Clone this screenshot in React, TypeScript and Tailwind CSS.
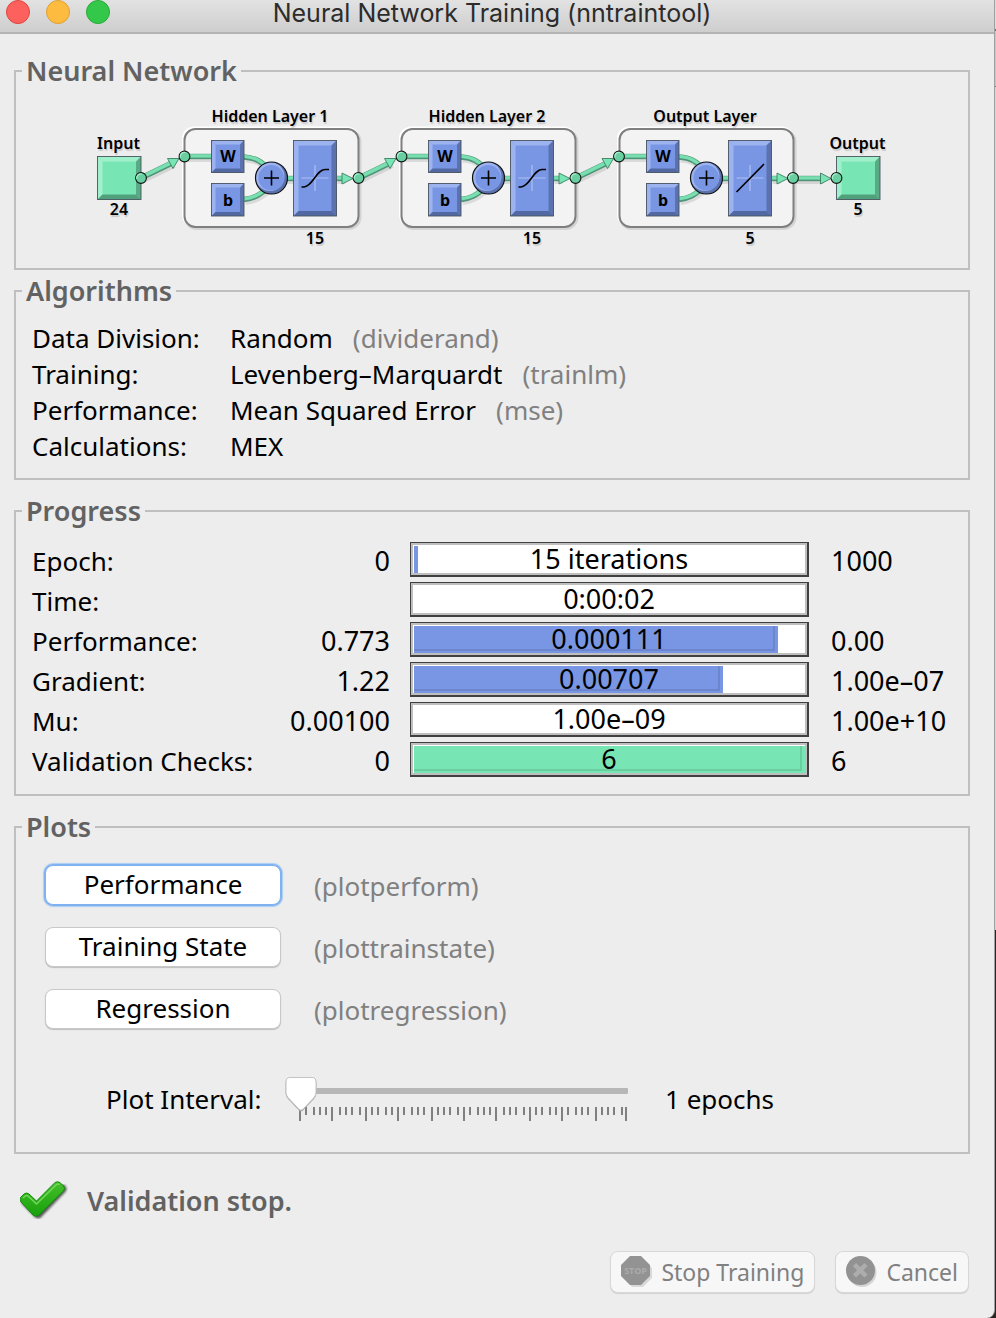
import { useState } from "react";
import type { ReactNode } from "react";

const BLUE = { face: "#7896e4", light: "#9db3f0", dark: "#5b72ae", darker: "#5268a2" };
const GREEN = { face: "#78e6b4", light: "#a0f0cc", dark: "#59ab86", darker: "#50a07c" };

type Tone = typeof BLUE;

function Block({ x, y, w, h, tone, bevel = 4 }: { x: number; y: number; w: number; h: number; tone: Tone; bevel?: number }) {
  const r = x + w;
  const b = y + h;
  const e = bevel;
  return (
    <g>
      <rect x={x} y={y} width={w} height={h} fill={tone.face} />
      <path d={`M${x} ${y}H${r}L${r - e} ${y + e}H${x + e}Z`} fill={tone.light} />
      <path d={`M${x} ${y}V${b}L${x + e} ${b - e}V${y + e}Z`} fill={tone.light} />
      <path d={`M${r} ${y}V${b}L${r - e} ${b - e}V${y + e}Z`} fill={tone.dark} />
      <path d={`M${x} ${b}H${r}L${r - e} ${b - e}H${x + e}Z`} fill={tone.darker} />
      <rect x={x} y={y} width={w} height={h} fill="none" stroke="#4a5560" strokeWidth="0.9" />
    </g>
  );
}

function Wire({ d }: { d: string }) {
  return (
    <g fill="none">
      <path d={d} stroke="#000" strokeOpacity="0.1" strokeWidth="5" transform="translate(1.5 3)" />
      <path d={d} stroke="#4f9478" strokeWidth="5.4" />
      <path d={d} stroke="#78dfb0" strokeWidth="3.4" transform="translate(0 -0.6)" />
    </g>
  );
}

function Port({ x, y }: { x: number; y: number }) {
  return (
    <g>
      <circle cx={x} cy={y} r="5.4" fill="#69cfa1" stroke="#111" strokeWidth="1.1" />
      <path d={`M${x - 4} ${y + 1}A4 4 0 0 1 ${x + 1} ${y - 4}`} fill="none" stroke="#a5efcd" strokeWidth="1.2" />
    </g>
  );
}

function Arrow({ points }: { points: string }) {
  return <polygon points={points} fill="#78e6b4" stroke="#3f7d63" strokeWidth="0.9" />;
}

function Label({ x, y, children }: { x: number; y: number; children: ReactNode }) {
  return (
    <text x={x} y={y} textAnchor="middle" className="text-[16px] font-semibold [text-shadow:1px_2px_1px_rgba(0,0,0,0.15)]">
      {children}
    </text>
  );
}

function Layer({ x, title, size, linear = false }: { x: number; title: string; size: number; linear?: boolean }) {
  return (
    <g transform={`translate(${x} 0)`}>
      <rect x="1.5" y="130.500" width="174.500" height="98" rx="11" fill="none" stroke="#000" strokeOpacity="0.1" strokeWidth="3" />
      <rect x="-1" y="127.5" width="175" height="98.5" rx="11" fill="none" stroke="#fff" strokeWidth="2" />
      <rect x="0.5" y="129" width="174" height="98" rx="11" fill="#f3f3f3" stroke="#7f7f7f" strokeWidth="2" />
      <Label x={86} y={122}>{title}</Label>
      <Wire d="M0 156.5H28" />
      <Wire d="M60 157C72 158 76 161 84 168" />
      <Wire d="M60 199.500C72 198 76 194 84 188" />
      <Wire d="M100 178.500H112" />
      <Wire d="M152 178.500H160" />
      <Block x={27.5} y={140.5} w={32.500} h={32} tone={BLUE} />
      <Block x={27.5} y={183.5} w={32.500} h={32.500} tone={BLUE} />
      <text x="44" y="162" textAnchor="middle" className="text-[16px] font-bold">W</text>
      <text x="44" y="206" textAnchor="middle" className="text-[16px] font-bold">b</text>
      <circle cx="87.500" cy="178" r="16" fill="#5b72ae" />
      <circle cx="86" cy="176.500" r="14.500" fill="#9db3f0" />
      <circle cx="87.200" cy="177.700" r="12.800" fill={BLUE.face} />
      <circle cx="87.500" cy="178" r="16" fill="none" stroke="#111" strokeWidth="1.200" />
      <path d="M80 178H95M87.500 170.500V185.500" stroke="#000" strokeWidth="1.600" />
      <Block x={109.5} y={140.5} w={43} h={75.500} tone={BLUE} bevel={5} />
      <path d="M117.500 178H144.500M131 165V191" stroke="#aebff3" strokeWidth="1.200" />
      <path
        d={linear ? "M117.500 192L145 164" : "M117.500 187H120C129 186 132 170 141 169.500H145"}
        fill="none"
        stroke="#000"
        strokeWidth="1.600"
      />
      <Arrow points="158,173 158,184 169,178.500" />
      <Label x={131} y={244}>{size}</Label>
    </g>
  );
}

function NetworkDiagram() {
  return (
    <svg viewBox="92 101 800 154" className="w-[800px] max-w-full" role="img" aria-label="Network diagram">
      <Layer x={184} title="Hidden Layer 1" size={15} />
      <Layer x={401} title="Hidden Layer 2" size={15} />
      <Layer x={619} title="Output Layer" size={5} linear />

      <Label x={118.500} y={149}>Input</Label>
      <Block x={97.5} y={156.5} w={43.500} h={43} tone={GREEN} bevel={5} />
      <Label x={119} y={215}>24</Label>

      <Label x={857.500} y={149}>Output</Label>
      <Block x={836.5} y={156.5} w={43.500} h={43} tone={GREEN} bevel={5} />
      <Label x={858} y={215}>5</Label>

      <Wire d="M141 178L173 162.500" />
      <Wire d="M359 178L391 162.500" />
      <Wire d="M576 178L608 162.500" />
      <Wire d="M793 178.500H822" />
      <Arrow points="167.500,158.500 179,158.500 173,168.500" />
      <Arrow points="384.500,158.500 396,158.500 390,168.500" />
      <Arrow points="602,158.500 613.500,158.500 607.500,168.500" />
      <Arrow points="820.500,173 820.500,184 831,178.500" />
      <Port x={141} y={178} />
      <Port x={184.500} y={156.500} />
      <Port x={358.500} y={178} />
      <Port x={401.500} y={156.500} />
      <Port x={575.500} y={178} />
      <Port x={619} y={156.500} />
      <Port x={793} y={178} />
      <Port x={836.500} y={178} />
    </svg>
  );
}

function Panel({ title, className, children }: { title: string; className: string; children: ReactNode }) {
  return (
    <fieldset className={`border-2 border-[#bfbfbf] px-4 ${className}`}>
      <legend className="-ml-2.5 px-1 text-[27px] leading-9 font-semibold text-[#626262]">{title}</legend>
      {children}
    </fieldset>
  );
}

const algorithms = [
  { label: "Data Division:", value: "Random", fn: "(dividerand)" },
  { label: "Training:", value: "Levenberg–Marquardt", fn: "(trainlm)" },
  { label: "Performance:", value: "Mean Squared Error", fn: "(mse)" },
  { label: "Calculations:", value: "MEX", fn: "" },
];

const progress = [
  { label: "Epoch:", min: "0", text: "15 iterations", max: "1000", pct: 1, color: "bg-[#7896e4]" },
  { label: "Time:", min: "", text: "0:00:02", max: "", pct: 0, color: "bg-[#7896e4]" },
  { label: "Performance:", min: "0.773", text: "0.000111", max: "0.00", pct: 93, color: "bg-[#7896e4]" },
  { label: "Gradient:", min: "1.22", text: "0.00707", max: "1.00e–07", pct: 79, color: "bg-[#7896e4]" },
  { label: "Mu:", min: "0.00100", text: "1.00e–09", max: "1.00e+10", pct: 0, color: "bg-[#7896e4]" },
  { label: "Validation Checks:", min: "0", text: "6", max: "6", pct: 100, color: "bg-[#78e6b4]" },
];

function Bar({ label, text, pct, color }: { label: string; text: string; pct: number; color: string }) {
  return (
    <div
      role="progressbar"
      aria-label={label}
      aria-valuenow={pct}
      aria-valuetext={text}
      className="grid h-[35px] border border-r-2 border-b-2 border-[#404040] bg-white"
    >
      <div className="col-start-1 row-start-1 border-2 border-[#bfbfbf] pt-px pl-px">
        {pct > 0 && (
          <div className={`h-full ${color} ${pct > 5 ? "pr-[3px] pb-0.5" : ""}`} style={{ width: `${pct}%` }}>
            {pct > 5 && <div className="h-full border-r-2 border-b-2 border-black/10" />}
          </div>
        )}
      </div>
      <span className="col-start-1 row-start-1 self-center text-center leading-8">{text}</span>
    </div>
  );
}

const plots = [
  { name: "Performance", fn: "(plotperform)" },
  { name: "Training State", fn: "(plottrainstate)" },
  { name: "Regression", fn: "(plotregression)" },
];

const majorTicks = [15, 47, 81, 113, 147, 179, 211, 245, 277, 311, 341];
const minorTicks = [
  21, 29, 35, 41, 55, 61, 67, 75, 87, 93, 101, 107, 119, 127, 133, 139, 153, 159, 165, 173, 185, 193, 199, 205, 219,
  225, 231, 239, 251, 257, 265, 271, 283, 291, 297, 303, 317, 323, 329, 337,
];

function IntervalSlider({ value, onChange }: { value: number; onChange: (n: number) => void }) {
  const shift = ((value - 1) / 49) * 326;
  return (
    <div className="relative">
      <svg width="344" height="48" viewBox="0 0 344 48" aria-hidden="true">
        <rect x="15" y="13" width="328" height="6" rx="1" fill="#b7b7b7" />
        {minorTicks.map((x) => (
          <rect key={x} x={x - 1} y="32" width="2" height="8" fill="#808080" />
        ))}
        {majorTicks.map((x) => (
          <rect key={x} x={x - 1} y="32" width="2" height="14" fill="#808080" />
        ))}
        <g transform={`translate(${shift} 0)`}>
          <path d="M5 3.500H27Q31.500 3.500 31.500 8V18Q31.500 21 29 24L18 35.500Q16 37.500 14 35.500L3 24Q.5 21 .5 18V8Q.5 3.500 5 3.500Z" fill="#a8a8a8" />
          <path d="M5 2.500H27Q31 2.500 31 7V17.500Q31 20 29 22.500L18 34.200Q16 36 14 34.200L3 22.500Q1 20 1 17.500V7Q1 2.500 5 2.500Z" fill="#fff" stroke="#c4c4c4" strokeWidth="1" />
        </g>
      </svg>
      <input
        id="interval"
        type="range"
        min={1}
        max={50}
        value={value}
        onChange={(e) => onChange(Number(e.target.value))}
        className="absolute inset-0 h-full w-full opacity-0"
      />
    </div>
  );
}

function CheckIcon() {
  return (
    <svg width="48" height="40" viewBox="0 0 48 40" aria-hidden="true">
      <defs>
        <linearGradient id="check" x1="0" y1="0" x2="0" y2="1">
          <stop offset="0" stopColor="#45c02b" />
          <stop offset="1" stopColor="#17a00c" />
        </linearGradient>
        <filter id="soft" x="-20%" y="-20%" width="140%" height="140%">
          <feGaussianBlur stdDeviation="1.300" />
        </filter>
      </defs>
      <path d="M6 20.500L18 33L42 8" fill="none" stroke="#222" strokeOpacity="0.75" strokeWidth="9" strokeLinecap="round" strokeLinejoin="round" filter="url(#soft)" />
      <path d="M0.500 16.500L4 13Q6.500 11 9 13L16.500 20L35 1.500Q37.500 0 40 1.500L43.500 5Q45.500 7.500 43.500 10L18.500 34.500Q16 36 13.500 34.500L1 21Q-.5 18.500 .5 16.500Z" fill="url(#check)" stroke="#168d0d" strokeWidth="1" />
      <path d="M3 17L5.500 14.800Q6.800 14 8 15L16.500 23L36.500 3.500Q38 2.500 39.500 3.800" fill="none" stroke="#74d85c" strokeWidth="1.500" strokeLinejoin="round" />
    </svg>
  );
}

function StopIcon() {
  return (
    <svg width="32" height="32" viewBox="0 0 32 32" aria-hidden="true">
      <path d="M10 3H22L31 12V22L22 31H11L2 22Z" fill="#000" opacity="0.12" />
      <path d="M9 0H20L29 9V20L20 29H9L0 20V9Z" fill="#939393" />
      <text x="14.500" y="18" textAnchor="middle" className="fill-[#ababab] text-[9px] font-bold">STOP</text>
    </svg>
  );
}

function CancelIcon() {
  return (
    <svg width="32" height="32" viewBox="0 0 32 32" aria-hidden="true">
      <circle cx="16" cy="16.500" r="14.500" fill="#000" opacity="0.14" />
      <circle cx="14.500" cy="14.500" r="14.500" fill="#929292" />
      <path d="M8.500 8.500L20 20M20 8.500L8.500 20" stroke="#adadad" strokeWidth="4.500" />
    </svg>
  );
}

const footerButton =
  "flex h-[42px] items-center gap-2 rounded-lg border border-[#d8d8d8] bg-[#f7f7f7] px-2.5 text-[23px] leading-8 text-[#808080] shadow-[0_1px_1px_rgba(0,0,0,0.12)]";

export default function App() {
  const [interval, setIntervalValue] = useState(1);

  return (
    <div className="flex min-h-screen bg-[linear-gradient(#dcdcdc_0_29px,#6f6f6f_29px_31px,#c8c8c8_31px_86px,#777_86px_87px,#d5d5d5_87px_930px,#2b2222_930px)] font-['Noto_Sans',sans-serif] text-[26px] text-black">
      <div className="min-w-0 flex-1 rounded-br-lg border-r border-[#a0a0a0] bg-[#ededed]">
        <header className="grid h-[34px] grid-cols-[1fr_auto_1fr] items-start border-b-2 border-[#b4b4b4] bg-linear-to-b from-[#e2e2e2] to-[#cecece] pr-4 pl-1.5">
          <div className="flex gap-4">
            <button aria-label="Close" className="size-6 rounded-full border border-[#e0443e] bg-[#fc615d]" />
            <button aria-label="Minimize" className="size-6 rounded-full border border-[#dea034] bg-[#fdbc40]" />
            <button aria-label="Zoom" className="size-6 rounded-full border border-[#27aa35] bg-[#34c84a]" />
          </div>
          <h1 className="font-[Inter,sans-serif] text-[25px] leading-[26px] text-[#2c2c2c]">
            Neural Network Training (nntraintool)
          </h1>
        </header>

        <main className="pt-[19px] pr-6 pl-3.5">
          <Panel title="Neural Network" className="mb-[3px] pt-3 pb-[13px]">
            <div className="flex justify-center">
              <NetworkDiagram />
            </div>
          </Panel>

          <Panel title="Algorithms" className="mb-[13px] pt-[11px] pb-3.5">
            <dl className="grid grid-cols-[198px_1fr] leading-9">
              {algorithms.map((a) => (
                <div key={a.label} className="col-span-2 grid grid-cols-subgrid">
                  <dt>{a.label}</dt>
                  <dd className="flex gap-5">
                    {a.value}
                    {a.fn && <span className="text-[#808080]">{a.fn}</span>}
                  </dd>
                </div>
              ))}
            </dl>
          </Panel>

          <Panel title="Progress" className="mb-[13px] pt-3 pb-[13px]">
            <table className="w-full table-fixed text-[27px]">
              <colgroup>
                <col className="w-[248px]" />
                <col className="w-[110px]" />
                <col />
                <col className="w-[121px]" />
              </colgroup>
              <tbody>
                {progress.map((p) => (
                  <tr key={p.label} className="h-10 leading-10 whitespace-nowrap">
                    <th scope="row" className="text-left text-[26px] font-normal">{p.label}</th>
                    <td className="text-right">{p.min}</td>
                    <td className="pt-px pr-[22px] pl-5 align-top">
                      <Bar label={p.label} text={p.text} pct={p.pct} color={p.color} />
                    </td>
                    <td>{p.max}</td>
                  </tr>
                ))}
              </tbody>
            </table>
          </Panel>

          <Panel title="Plots" className="pt-5 pb-7">
            <div className="flex flex-col gap-[22px] pl-[13px]">
              {plots.map((p, i) => (
                <div key={p.name} className="flex h-10 items-center gap-[33px]">
                  <button
                    className={`h-10 w-[236px] rounded-lg border bg-white pb-0.5 leading-9 ${
                      i === 0
                        ? "border-[#7fb2ee] shadow-[0_0_0_1px_#7fb2ee,0_0_1px_2px_#a9ccf4]"
                        : "border-[#c8c8c8] shadow-[0_1px_1px_rgba(0,0,0,0.2)]"
                    }`}
                  >
                    {p.name}
                  </button>
                  <span className="pt-0.5 text-[#808080]">{p.fn}</span>
                </div>
              ))}
            </div>
            <div className="mt-[45px] flex h-[50px] items-center pl-[74px]">
              <label htmlFor="interval" className="w-[179px]">Plot Interval:</label>
              <IntervalSlider value={interval} onChange={setIntervalValue} />
              <output htmlFor="interval" className="pl-9">{interval} epochs</output>
            </div>
          </Panel>

          <div className="flex h-[94px] items-center gap-[19px] pl-1.5">
            <CheckIcon />
            <p className="text-[27px] font-semibold text-[#626262]">Validation stop.</p>
          </div>

          <div className="flex justify-end gap-5 pt-[3px] pr-px pb-[25px]">
            <button disabled className={footerButton}>
              <StopIcon />
              Stop Training
            </button>
            <button disabled className={footerButton}>
              <CancelIcon />
              Cancel
            </button>
          </div>
        </main>
      </div>
      <div className="w-px" />
    </div>
  );
}
